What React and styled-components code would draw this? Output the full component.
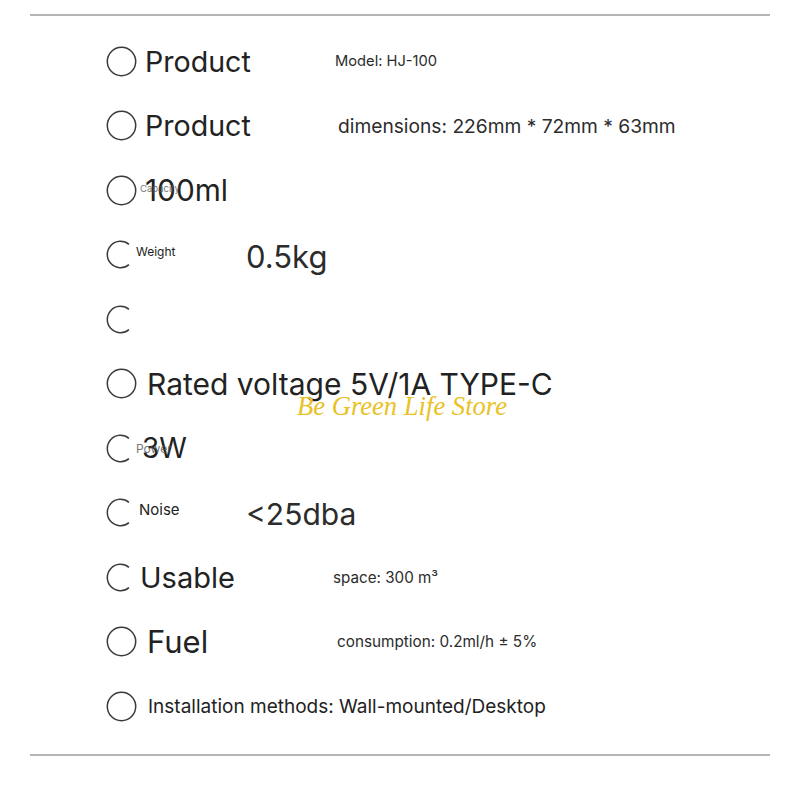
import React from "react";
import styled, { createGlobalStyle } from "styled-components";

const Global = createGlobalStyle`
  html, body { margin: 0; padding: 0; background: #ffffff; }
  body { font-family: Inter, Roboto, "Noto Sans", "Liberation Sans", sans-serif; color: #222222; }
`;

const Page = styled.div`
  width: 800px;
  height: 800px;
  padding-top: 14px;
  box-sizing: border-box;
  position: relative;
`;

const Divider = styled.hr`
  margin: 0 30px;
  border: none;
  height: 2px;
  background: #b4b4b4;
`;

const List = styled.ul`
  list-style: none;
  margin: 0;
  padding: 13px 0 15px 106px;
  display: flex;
  flex-direction: column;
`;

const Row = styled.li`
  height: 64.5px;
  display: flex;
  align-items: center;
  position: relative;
`;

const Label = styled.span`
  position: relative;
  margin-left: ${(p) => p.$gap ?? 9}px;
  width: ${(p) => (p.$w ? `${p.$w}px` : "auto")};
  flex: none;
  font-size: ${(p) => p.$size ?? 28.6}px;
  font-weight: 400;
  color: #222222;
  white-space: nowrap;
  transform: translateY(${(p) => p.$dy ?? 0}px);
`;

const Value = styled.span`
  font-size: ${(p) => p.$size ?? 14}px;
  color: #2c2c2c;
  white-space: nowrap;
  transform: translateY(${(p) => p.$dy ?? 0}px);
`;

const Ghost = styled.span`
  position: absolute;
  left: ${(p) => p.$x}px;
  top: ${(p) => p.$y}px;
  font-size: ${(p) => p.$size ?? 10}px;
  color: #555555;
  opacity: 0.8;
  white-space: nowrap;
`;

const Watermark = styled.div`
  position: absolute;
  left: 297px;
  top: 391px;
  font-family: "Liberation Serif", "DejaVu Serif", serif;
  font-style: italic;
  font-size: 26.6px;
  color: #e9c227;
  white-space: nowrap;
  pointer-events: none;
`;

const IconBox = styled.svg`
  flex: none;
  display: block;
`;

function Ring() {
  return (
    <IconBox width="31" height="31" viewBox="0 0 31 31">
      <circle cx="15.5" cy="15.5" r="14.2" fill="none" stroke="#3a3a3a" strokeWidth="1.5" />
    </IconBox>
  );
}

function Open() {
  // arc open on the right side
  const r = 13.2;
  const c = 14.5;
  const a = (50 * Math.PI) / 180;
  const x = c + r * Math.cos(a);
  const y1 = c - r * Math.sin(a);
  const y2 = c + r * Math.sin(a);
  return (
    <IconBox width="29" height="29" viewBox="0 0 29 29">
      <path
        d={`M${x.toFixed(2)} ${y1.toFixed(2)} A${r} ${r} 0 1 0 ${x.toFixed(2)} ${y2.toFixed(2)}`}
        fill="none"
        stroke="#3a3a3a"
        strokeWidth="1.5"
      />
    </IconBox>
  );
}

export default function App() {
  return (
    <Page>
      <Global />
      <Divider />
      <List>
        <Row>
          <Ring />
          <Label $gap={8} $w={190}>Product</Label>
          <Value $size={14.7}>Model: HJ-100</Value>
        </Row>
        <Row>
          <Ring />
          <Label $gap={8} $w={193}>Product</Label>
          <Value $size={19.2}>dimensions: 226mm * 72mm * 63mm</Value>
        </Row>
        <Row>
          <Ring />
          <Label $gap={8} $size={29.8}>
            100ml
            <Ghost $x={-5} $y={11} $size={9.5}>Capacity</Ghost>
          </Label>
        </Row>
        <Row>
          <Open />
          <Label $gap={1} $w={110} $size={12} $dy={-3}>Weight</Label>
          <Value $size={31} $dy={2}>0.5kg</Value>
        </Row>
        <Row>
          <Open />
        </Row>
        <Row>
          <Ring />
          <Label $gap={10} $size={30}>Rated voltage 5V/1A TYPE-C</Label>
        </Row>
        <Row>
          <Open />
          <Label $gap={7} $size={28}>
            3W
            <Ghost $x={-6} $y={10} $size={12}>Power</Ghost>
          </Label>
        </Row>
        <Row>
          <Open />
          <Label $gap={4} $w={107} $size={15} $dy={-3}>Noise</Label>
          <Value $size={30} $dy={1}>&lt;25dba</Value>
        </Row>
        <Row>
          <Open />
          <Label $gap={5} $w={193} $size={29}>Usable</Label>
          <Value $size={15.2}>space: 300 m³</Value>
        </Row>
        <Row>
          <Ring />
          <Label $gap={10} $w={190} $size={31}>Fuel</Label>
          <Value $size={15.3}>consumption: 0.2ml/h ± 5%</Value>
        </Row>
        <Row>
          <Ring />
          <Label $gap={11} $size={19}>Installation methods: Wall-mounted/Desktop</Label>
        </Row>
      </List>
      <Divider />
      <Watermark>Be Green Life Store</Watermark>
    </Page>
  );
}
